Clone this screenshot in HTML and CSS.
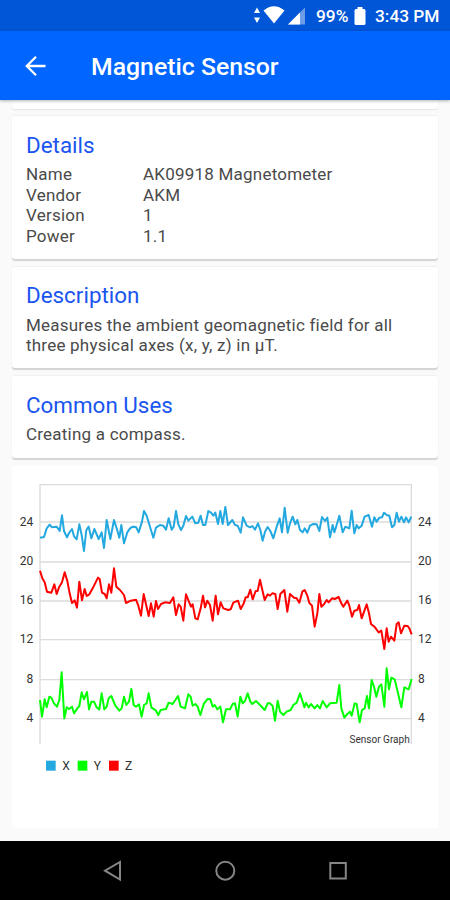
FILE: index.html
```html
<!DOCTYPE html>
<html>
<head>
    <meta charset="utf-8">
    <meta content="width=device-width, initial-scale=1" name="viewport">
    <title>Magnetic Sensor</title>
    <link rel="stylesheet" href="styles.css">
</head>
<body>
<div class="status">
    <svg class="signals" width="55" height="31" viewBox="0 0 55 31">
        <path d="M4 7.5L7 13H1zM4 23L1 17.500h6z" fill="#fff"/>
        <path d="M10.500 10.500Q21 2 31.500 10.500L21 23.500z" fill="#fff"/>
        <path d="M52 7.500V24.500H35z" fill="#6d9ce8"/>
        <path d="M47 12.500V24.500H35z" fill="#fff"/>
    </svg>
    <span class="percent">99%</span>
    <svg class="battery" width="12" height="20" viewBox="0 0 12 20">
        <path d="M3.500 1h5v2H10q1.500 0 1.500 1.500v13Q11.500 19 10 19H2Q.5 19 .5 17.500v-13Q.5 3 2 3h1.500z" fill="#fff"/>
    </svg>
    <span class="time">3:43 PM</span>
</div>
<div class="header">
    <svg class="back" width="22" height="22" viewBox="0 0 22 22">
        <path d="M20.500 11H2.500M11 1.800L1.800 11l9.200 9.200" fill="none" stroke="#fff" stroke-width="2.300"/>
    </svg>
    <h1>Magnetic Sensor</h1>
</div>

<div class="main">
    <div class="card previous"></div>
    <div class="card details">
        <h2>Details</h2>
        <dl>
            <dt>Name</dt><dd>AK09918 Magnetometer</dd>
            <dt>Vendor</dt><dd>AKM</dd>
            <dt>Version</dt><dd>1</dd>
            <dt>Power</dt><dd>1.1</dd>
        </dl>
    </div>
    <div class="card description">
        <h2>Description</h2>
        <p>Measures the ambient geomagnetic field for all<br>three physical axes (x, y, z) in µT.</p>
    </div>
    <div class="card uses">
        <h2>Common Uses</h2>
        <p>Creating a compass.</p>
    </div>
    <div class="card graph">
        <svg width="426" height="362" viewBox="36 1398 1278 1086">
            <!-- grid -->
            <path class="grid" d="M120 1566H1234M120 1686H1234M120 1803H1234M120 1919H1234M120 2039H1234M120 2156H1234"/>
            <path class="frame" d="M120 2233V1454H1234V2233"/>
            <!-- x, z, y -->
            <polyline class="line x" transform="translate(0 1425)" points="120,188 132,186 140,160 149,149 156,157 170,155 179,168 186,121 192,168 201,187 207,174 216,162 222,184 230,193 238,148 245,180 252,228 259,165 266,155 274,190 283,162 296,192 305,172 312,219 320,135 331,192 342,135 350,160 358,188 364,150 372,205 382,172 390,160 398,155 408,156 416,172 426,140 432,108 440,122 460,188 468,158 480,150 490,152 498,164 506,130 515,164 521,155 528,108 535,148 543,165 550,152 558,123 565,137 577,125 586,145 595,143 602,122 609,150 616,150 625,108 633,113 640,122 646,113 654,147 661,108 668,147 676,96 684,150 697,135 705,150 713,152 722,173 729,127 740,152 750,157 757,153 765,164 774,145 781,165 788,197 795,170 803,156 811,168 820,190 830,155 839,130 846,172 854,98 863,173 870,145 878,125 886,148 892,135 900,165 908,172 914,160 922,173 930,152 940,147 950,148 958,168 966,126 975,138 982,128 990,187 998,150 1003,172 1010,150 1018,122 1028,172 1036,155 1048,160 1055,107 1063,175 1070,150 1076,160 1085,152 1094,125 1106,120 1116,155 1123,127 1130,140 1138,128 1146,127 1152,113 1160,120 1168,122 1176,157 1183,150 1190,113 1197,140 1204,125 1212,142 1218,127 1226,142 1234,125"/>
            <polyline class="line z" transform="translate(0 1425)" points="120,287 127,310 134,322 141,350 154,353 163,328 170,357 178,335 186,322 194,292 202,318 209,355 216,384 224,376 231,398 238,320 246,376 254,342 260,363 268,358 278,340 294,308 299,312 306,353 314,357 320,370 327,328 334,353 342,280 349,335 360,345 372,360 378,384 392,377 408,374 415,392 423,422 431,357 438,388 446,423 453,385 461,425 468,378 474,402 483,387 495,382 510,384 520,367 528,420 536,388 542,395 550,437 558,358 566,378 573,395 578,388 586,430 593,433 602,400 609,362 615,397 622,377 630,390 638,437 647,362 654,418 662,382 670,400 685,405 692,403 700,383 714,377 722,402 730,388 737,367 743,367 751,344 758,373 767,348 773,348 780,314 787,345 794,375 803,358 810,362 817,355 826,357 833,402 841,357 853,345 862,410 870,357 882,368 890,370 898,383 907,350 914,345 922,362 928,384 936,392 944,455 952,415 958,357 964,395 972,388 980,375 986,382 996,370 1004,372 1016,366 1024,385 1030,395 1042,377 1048,392 1056,425 1063,407 1072,405 1077,390 1085,430 1100,388 1107,415 1113,447 1125,457 1136,472 1144,467 1153,522 1160,460 1166,500 1173,485 1183,497 1190,447 1196,442 1203,475 1213,452 1223,453 1228,460 1235,478"/>
            <polyline class="line y" transform="translate(0 1800)" points="120,300 126,350 134,298 140,322 148,290 154,293 162,310 171,320 178,300 185,217 193,355 200,322 207,327 216,320 222,340 232,325 238,318 245,277 252,298 261,276 267,328 274,305 282,305 290,322 298,328 305,280 313,328 320,320 326,295 334,288 346,317 358,332 365,325 372,290 379,315 387,305 394,267 401,315 408,320 417,313 425,350 432,315 440,310 446,280 454,322 468,332 475,345 482,330 498,327 506,308 518,312 526,300 534,288 542,320 555,325 565,283 572,290 578,317 586,312 593,320 601,345 612,310 623,297 631,298 638,320 644,315 652,328 661,320 669,367 678,328 690,328 698,312 705,310 713,350 721,290 728,310 735,303 743,280 751,305 757,312 768,303 780,315 794,330 803,310 810,310 818,318 825,362 833,302 840,335 850,345 860,335 872,330 880,315 890,308 900,280 908,305 913,322 918,308 926,322 933,312 944,325 952,315 960,325 968,303 980,322 990,310 1010,308 1018,255 1024,325 1033,353 1042,342 1050,335 1055,347 1064,310 1070,312 1079,367 1086,330 1094,325 1101,288 1107,325 1115,240 1122,260 1129,290 1137,260 1144,253 1153,320 1160,205 1167,268 1174,233 1184,238 1193,275 1204,322 1213,262 1226,268 1235,237"/>
            <!-- axis labels -->
            <g class="axis left">
                <text x="100" y="1578">24</text>
                <text x="100" y="1695">20</text>
                <text x="100" y="1813">16</text>
                <text x="100" y="1930">12</text>
                <text x="100" y="2048">8</text>
                <text x="100" y="2165">4</text>
            </g>
            <g class="axis">
                <text x="1254" y="1578">24</text>
                <text x="1254" y="1695">20</text>
                <text x="1254" y="1813">16</text>
                <text x="1254" y="1930">12</text>
                <text x="1254" y="2048">8</text>
                <text x="1254" y="2165">4</text>
            </g>
            <text class="caption" x="1229" y="2229">Sensor Graph</text>
            <!-- legend -->
            <rect x="138" y="2282" width="29" height="30" fill="#23a8e0"/>
            <rect x="233" y="2282" width="29" height="30" fill="#0f0"/>
            <rect x="327" y="2282" width="29" height="30" fill="#f00"/>
            <g class="axis">
                <text x="187" y="2310">X</text>
                <text x="281" y="2310">Y</text>
                <text x="375" y="2310">Z</text>
            </g>
        </svg>
    </div>
</div>

<div class="nav">
    <svg width="20" height="22" viewBox="0 0 20 22"><path d="M18 2v17.500L3 10.700z"/></svg>
    <svg width="22" height="22" viewBox="0 0 22 22"><circle cx="11.300" cy="10.700" r="9"/></svg>
    <svg width="20" height="22" viewBox="0 0 20 22"><path d="M2.300 3h15.500v15.500H2.300z"/></svg>
</div>
</body>
</html>
```
FILE: styles.css
```css
* {
    box-sizing: border-box;
    margin: 0;
    padding: 0;
}

body {
    width: 450px;
    height: 900px;
    display: flex;
    flex-direction: column;
    overflow: hidden;
    background-color: #fafafa;
    color: #4a4a4a;
    font-family: Roboto, "Liberation Sans", sans-serif;
}

.status {
    height: 31px;
    flex: none;
    display: flex;
    align-items: center;
    justify-content: flex-end;
    padding-right: 10px;
    background-color: #0056d6;
    color: #fff;
    font-size: 17.3px;
    font-weight: 500;
    white-space: nowrap;
}

.percent {
    width: 32px;
    margin-left: 8px;
}

.battery {
    margin: 0 9px 0 6px;
}

.time {
    width: 65px;
}

.header {
    height: 69px;
    flex: none;
    display: flex;
    align-items: center;
    padding: 1px 25px 0;
    background-color: #0066ff;
    box-shadow: 0 1px 3px rgba(0, 0, 0, 0.3);
    color: #fff;
    z-index: 1;
}

.header h1 {
    margin: 1px 0 0 44px;
    font-size: 24.8px;
    font-weight: 500;
}

.main {
    flex: 1;
    display: flex;
    flex-direction: column;
    padding: 0 12px;
}

.card {
    flex: none;
    padding: 0 14px;
    margin-bottom: 8px;
    border-radius: 3px;
    background-color: #fff;
    box-shadow: 0 2px 1px #d4d4d4, 0 -1px 1px #f0f0f0;
}

.card h2 {
    color: #1a55f0;
    font-size: 22.4px;
    line-height: 26px;
    font-weight: 400;
}

.card p,
.card dl {
    font-size: 17px;
    line-height: 20.5px;
    letter-spacing: 0.22px;
}

.card dl {
    display: grid;
    grid-template-columns: 117px 1fr;
}

.previous {
    height: 9px;
    margin-bottom: 7px;
    box-shadow: 0 1px 1px #e4e4e4;
}

.details {
    height: 143px;
    padding-top: 16px;
}

.details dl {
    margin-top: 6px;
}

.description {
    height: 101px;
    padding-top: 15px;
}

.description p,
.uses p {
    margin-top: 6.5px;
}

.uses {
    height: 82px;
    padding-top: 16px;
}

.uses p {
    margin-top: 6px;
}

.graph {
    height: 362px;
    margin: 0;
    padding: 0;
    box-shadow: none;
}

.graph svg {
    display: block;
}

.grid,
.frame {
    fill: none;
    stroke: #dcdcdc;
    stroke-width: 4;
}

.line {
    fill: none;
    stroke-width: 6;
    stroke-linejoin: round;
}

.x {
    stroke: #23a8e0;
}

.y {
    stroke: #0f0;
}

.z {
    stroke: #f00;
}

.axis,
.caption {
    font-size: 36px;
    fill: #333;
}

.left,
.caption {
    text-anchor: end;
}

.caption {
    font-size: 30px;
}

.nav {
    height: 59px;
    flex: none;
    display: flex;
    justify-content: center;
    align-items: center;
    gap: 92px;
    background-color: #000;
}

.nav svg {
    fill: none;
    stroke: #858585;
    stroke-width: 2;
}
```
